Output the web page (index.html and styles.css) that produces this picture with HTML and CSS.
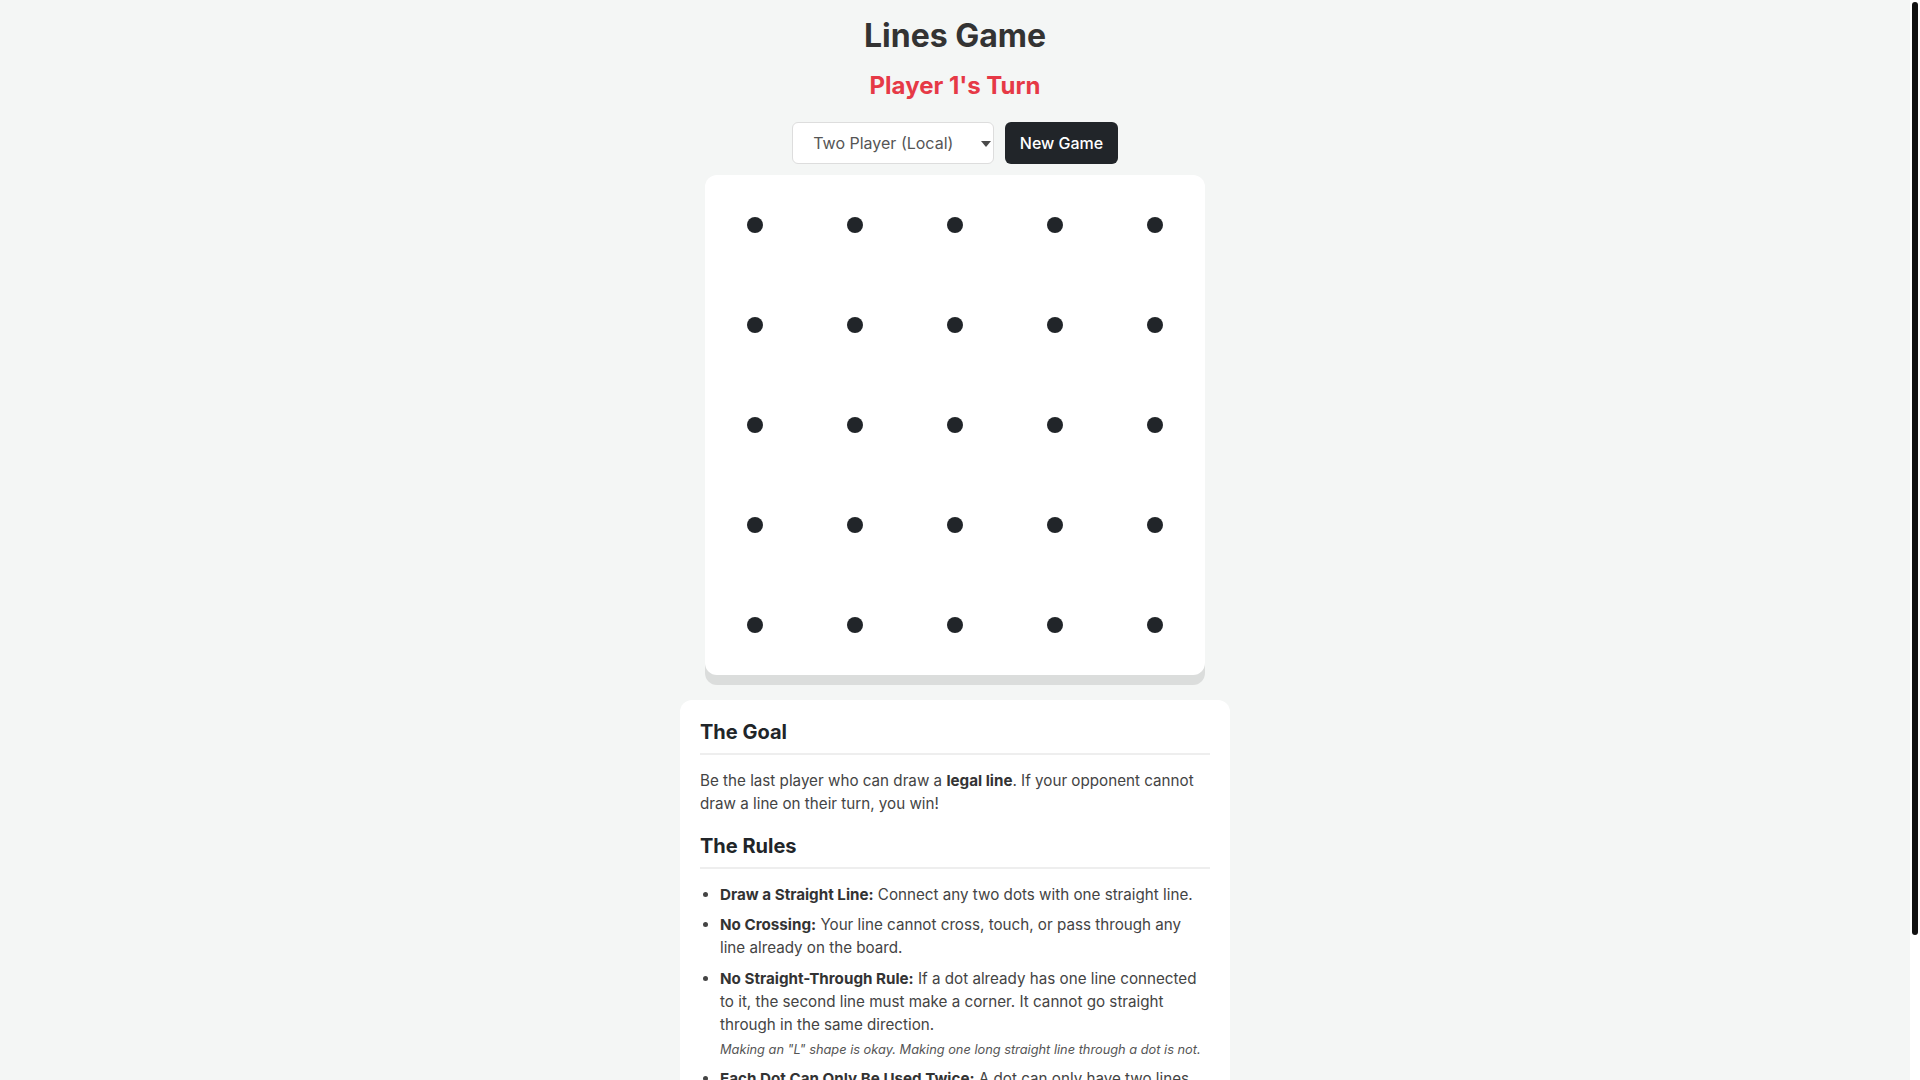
FILE: index.html
```html
<!DOCTYPE html>
<html lang="en">
<head>
<meta charset="utf-8">
<title>Lines Game</title>
<link rel="stylesheet" href="styles.css">
</head>
<body>
<main class="app">
  <h1 class="title">Lines Game</h1>
  <div class="turn">Player 1's Turn</div>

  <div class="controls">
    <span class="select-wrap">
      <select class="mode">
        <option>Two Player (Local)</option>
        <option>Versus Computer</option>
      </select>
      <span class="select-arrow"></span>
    </span>
    <button class="btn" type="button">New Game</button>
  </div>

  <div class="board">
    <svg class="board-svg" width="500" height="500" viewBox="0 0 500 500">
      <g fill="#212529">
        <circle cx="50" cy="50" r="8"/><circle cx="150" cy="50" r="8"/><circle cx="250" cy="50" r="8"/><circle cx="350" cy="50" r="8"/><circle cx="450" cy="50" r="8"/>
        <circle cx="50" cy="150" r="8"/><circle cx="150" cy="150" r="8"/><circle cx="250" cy="150" r="8"/><circle cx="350" cy="150" r="8"/><circle cx="450" cy="150" r="8"/>
        <circle cx="50" cy="250" r="8"/><circle cx="150" cy="250" r="8"/><circle cx="250" cy="250" r="8"/><circle cx="350" cy="250" r="8"/><circle cx="450" cy="250" r="8"/>
        <circle cx="50" cy="350" r="8"/><circle cx="150" cy="350" r="8"/><circle cx="250" cy="350" r="8"/><circle cx="350" cy="350" r="8"/><circle cx="450" cy="350" r="8"/>
        <circle cx="50" cy="450" r="8"/><circle cx="150" cy="450" r="8"/><circle cx="250" cy="450" r="8"/><circle cx="350" cy="450" r="8"/><circle cx="450" cy="450" r="8"/>
      </g>
    </svg>
  </div>

  <section class="rules">
    <h2>The Goal</h2>
    <p>Be the last player who can draw a <strong>legal line</strong>. If your opponent cannot draw a line on their turn, you win!</p>

    <h2>The Rules</h2>
    <ul>
      <li><strong>Draw a Straight Line:</strong> Connect any two dots with one straight line.</li>
      <li><strong>No Crossing:</strong> Your line cannot cross, touch, or pass through any line already on the board.</li>
      <li><strong>No Straight-Through Rule:</strong> If a dot already has one line connected to it, the second line must make a corner. It cannot go straight through in the same direction.
        <span class="note">Making an "L" shape is okay. Making one long straight line through a dot is not.</span>
      </li>
      <li><strong>Each Dot Can Only Be Used Twice:</strong> A dot can only have two lines connected to it. Once a dot has two lines, it is full.</li>
      <li><strong>No Passing:</strong> You must draw a line on your turn if a legal move exists.</li>
    </ul>
  </section>
</main>

<div class="scroll-rail" aria-hidden="true"><div class="scroll-thumb"></div></div>
</body>
</html>
```

FILE: styles.css
```css
html {
  background: #f4f6f5;
}

body {
  box-sizing: border-box;
  margin: 0;
  padding-right: 10px;
  background: #f4f6f5;
  font-family: Inter, "Noto Sans", "Liberation Sans", sans-serif;
  color: #333;
}

.scroll-rail {
  position: fixed;
  top: 0;
  right: 0;
  bottom: 0;
  width: 10px;
  background: #ffffff;
}

.scroll-thumb {
  margin: 2px 2px 0;
  height: 933px;
  background: #111111;
  border-radius: 3px;
}

.app {
  display: flex;
  flex-direction: column;
  align-items: center;
  padding: 16px 0 40px;
}

.title {
  margin: 0;
  font-size: 32px;
  font-weight: 700;
  line-height: normal;
  color: #333333;
}

.turn {
  margin-top: 16px;
  font-size: 24px;
  font-weight: 700;
  line-height: normal;
  color: #e63946;
}

.controls {
  margin-top: 22px;
  display: flex;
  gap: 11px;
  align-items: center;
}

.select-wrap {
  position: relative;
  display: inline-flex;
}

.mode {
  appearance: none;
  -webkit-appearance: none;
  height: 42px;
  padding: 0 39px 0 20px;
  border: 1px solid #dddddd;
  border-radius: 6px;
  background: #ffffff;
  font-family: inherit;
  font-size: 16px;
  color: #555555;
}

.select-arrow {
  position: absolute;
  right: 3px;
  top: 19px;
  width: 0;
  height: 0;
  border-left: 5.5px solid transparent;
  border-right: 5.5px solid transparent;
  border-top: 6px solid #4a4a4a;
  pointer-events: none;
}

.btn {
  height: 42px;
  padding: 0 14.5px;
  border: 0;
  border-radius: 6px;
  background: #212529;
  color: #ffffff;
  font-family: inherit;
  font-size: 16px;
  font-weight: 500;
}

.board {
  margin-top: 11px;
  width: 500px;
  height: 500px;
  background: #ffffff;
  border-radius: 12px;
  box-shadow: 0 10px 0 rgba(0, 0, 0, 0.1);
}

.board-svg {
  display: block;
}

.rules {
  box-sizing: border-box;
  width: 550px;
  margin-top: 25px;
  padding: 20px;
  background: #ffffff;
  border-radius: 12px;
  color: #444444;
  font-size: 15.2px;
  line-height: 1.5;
}

.rules h2 {
  margin: 18px 0 15px;
  padding-bottom: 9px;
  border-bottom: 2px solid #eeeeee;
  font-size: 20px;
  line-height: normal;
  font-weight: 700;
  color: #212529;
}

.rules h2:first-child {
  margin-top: 0;
}

.rules p {
  margin: 0 0 15px;
}

.rules strong {
  color: #333333;
}

.rules ul {
  margin: 0;
  padding-left: 20px;
}

.rules li {
  margin-bottom: 8px;
}

.note {
  display: block;
  margin-top: 4px;
  font-size: 12.8px;
  font-style: italic;
  color: #555555;
}
```
